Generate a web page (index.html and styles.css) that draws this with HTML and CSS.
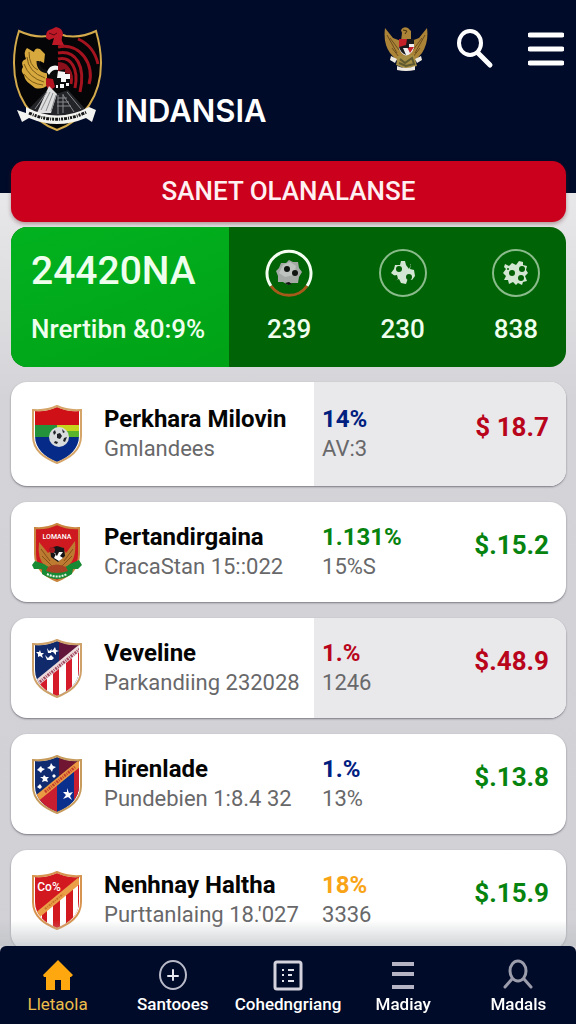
FILE: index.html
```html
<!DOCTYPE html>
<html lang="id">
<head>
    <meta charset="UTF-8">
    <meta name="viewport" content="width=device-width, initial-scale=1">
    <title>INDANSIA</title>
    <link rel="stylesheet" href="styles.css">
</head>
<body>
<header class="header">
    <div class="brand">
        <svg class="brand-logo" viewBox="12 26 92 106" aria-hidden="true">
            <path d="M19 31Q34 38 48 36Q57 32 66 36Q82 38 96 31Q101 48 101 63C101 96 84 120 57 130C30 120 14 96 14 63Q14 46 19 31Z" fill="#050507" stroke="#d3aa4c" stroke-width="2"/>
            <path d="M58 53C76 50 86 66 80 92M58 59C71 56 79 69 75 88M58 65C67 64 73 72 71 84M58 47C81 42 95 66 89 84M78 39Q94 46 98 64" fill="none" stroke="#a5131f" stroke-width="3"/>
            <path d="M58 62Q71 62 72 78L66 82L58 74Z" fill="#8b101b"/>
            <path d="M46 38Q45 30 52 29L56 27Q63 28 63 35Q60 39 64 45L52 45L54 38L49 40Z" fill="#bd1826"/>
            <path d="M49 33L54 35L57 33" fill="none" stroke="#540811"/>
            <path d="M27 48L34 52Q35 47 40 49L45 54L44 63L40 61Q37 65 40 69Q43 72 48 71L48 85Q42 90 35 88L30 84Q25 81 24 75Q20 71 23 67Q20 61 26 59Q23 52 27 48Z" fill="#d6a83e"/>
            <path d="M27 57Q28 72 45 78M24 64Q29 78 44 82M24 74Q31 84 43 85M29 52Q29 66 38 70" fill="none" stroke="#7d5b15" stroke-width="1"/>
            <path d="M38 61Q38 71 48 72" fill="none" stroke="#111" stroke-width="3"/>
            <path d="M47 72Q50 64 58 66L58 71L65 69V73L70 74V83L66 84V90L57 93L47 88Z" fill="#0a0a0b"/>
            <path d="M47 72Q50 64 58 66L58 70Q52 69 49 75ZM58 71L65 72V74H70V79H66V82H61V78H57ZM60 84H64V88H60ZM66 83H69V86H66ZM56 85H58V88H56Z" fill="#f5f5f5"/>
            <path d="M46 78L53 79L55 87L49 91L46 85Z" fill="#b31420"/>
            <path d="M26 112L49 88L56 94L68 90L88 112L57 117Z" fill="#232427"/>
            <path d="M49 86L57 94L51 113H37Z" fill="#dedede"/>
            <path d="M35 109L47 92M41 110L50 92M46 111L53 93M51 111L56 95M67 92L81 109M63 95L74 112M58 98H67M57 102H69M57 106H71M58 95V114M63 94V113" stroke="#888b8e" stroke-width="1"/>
            <path d="M26 107Q57 124 89 107L96 110L92 122L86 118Q57 130 29 118L22 122L17 110L26 113Z" fill="#f3f3ef"/>
            <path d="M29 113Q57 126 87 112" fill="none" stroke="#161616" stroke-width="3" stroke-dasharray="3 1 1 1 2 1"/>
        </svg>
        <h1 class="brand-name">INDANSIA</h1>
    </div>
    <div class="actions">
        <svg class="garuda" viewBox="0 0 44 46" aria-hidden="true">
            <path d="M1 2L9 12L17 15L18 7L17 4Q19 0 24 2L27 5L27 15L35 12L43 2Q45 16 38 27L30 36H14L6 27Q-1 17 1 2Z" fill="#ac8438"/>
            <path d="M3 9L13 27M6 12L15 24M41 9L31 27M38 12L29 24M8 22L15 31M36 22L29 31" fill="none" stroke="#6b4c1d"/>
            <path d="M19 4L23 5L21 8" fill="none" stroke="#45310f"/>
            <path d="M15 13H30V22Q28 28 22 30Q16 27 15 22Z" fill="#eee"/>
            <path d="M15 13H23V21H15ZM23 21H30L26 27Z" fill="#c52129"/>
            <path d="M23 13H30V18H25V22H19L22 29Q16 26 15 21L22 19Z" fill="#17191d"/>
            <path d="M14 30L30 29L33 40L22 43L12 39Z" fill="#a58d43"/>
            <path d="M16 33L21 37L28 32L30 38L22 40L15 37" fill="none" stroke="#5e5930" stroke-width="2"/>
            <path d="M7 30L13 33L11 37L6 34ZM37 30L31 33L33 37L38 34ZM13 40Q22 44 31 40V44Q22 46 13 44Z" fill="#eeeae2"/>
        </svg>
        <button class="icon-btn" type="button" aria-label="Cari">
            <svg width="38" height="40" viewBox="0 0 38 40" aria-hidden="true">
                <ellipse cx="14" cy="14" rx="11" ry="12" fill="none" stroke="#fff" stroke-width="4"/>
                <path d="M22 24L34 36" stroke="#fff" stroke-width="5" stroke-linecap="round"/>
            </svg>
        </button>
        <button class="icon-btn" type="button" aria-label="Menu">
            <svg width="36" height="34" viewBox="0 0 36 34" aria-hidden="true">
                <path d="M2 3H34M2 17H34M2 31H34" stroke="#fff" stroke-width="5" stroke-linecap="round"/>
            </svg>
        </button>
    </div>
</header>

<main class="main">
    <h2 class="banner">SANET OLANALANSE</h2>

    <section class="summary">
        <div class="summary-main">
            <p class="summary-value">24420NA</p>
            <p class="summary-note">Nrertibn &amp;0:9%</p>
        </div>
        <ul class="stats">
            <li class="stat">
                <svg class="stat-icon" viewBox="0 0 48 48" aria-hidden="true">
                    <path d="M6 37A22 22 0 1 1 42 37" fill="none" stroke="#f4fff2" stroke-width="3"/>
                    <path d="M6 37A22 22 0 0 0 42 37" fill="none" stroke="#a85a1b" stroke-width="3"/>
                    <path d="M16 14L21 14L24 11L28 13L33 13L34 19L37 23L34 28L33 34L27 34L23 36L18 33L13 33L13 27L11 22L14 19Z" fill="#a5aaa6"/>
                    <path d="M18 16L25 13L31 17L29 26L20 28L14 24Z" fill="#bfc3c0"/>
                    <circle cx="22" cy="20" r="3" fill="#101411"/>
                    <circle cx="30" cy="24" r="3" fill="#101411"/>
                    <path d="M20 34L24 33L27 35L23 36Z" fill="#101411"/>
                </svg>
                <span>239</span>
            </li>
            <li class="stat">
                <svg class="stat-icon" viewBox="0 0 48 48" aria-hidden="true">
                    <circle cx="24" cy="24" r="23" fill="none" stroke="#8abb8b" stroke-width="2"/>
                    <path d="M22 12H26L27 16L32 15L31 20L35 21L36 27L33 31L29 29L27 35L22 34L20 30L15 32L16 27L12 24L15 20L16 16L21 16Z" fill="#d3e6d4"/>
                    <circle cx="20" cy="20" r="3" fill="#046006"/>
                    <circle cx="30" cy="28" r="3" fill="#046006"/>
                    <path d="M27 16L29 13L32 16L30 20ZM13 27L18 26L19 30L15 33Z" fill="#046006"/>
                </svg>
                <span>230</span>
            </li>
            <li class="stat">
                <svg class="stat-icon" viewBox="0 0 48 48" aria-hidden="true">
                    <circle cx="24" cy="24" r="23" fill="none" stroke="#8abb8b" stroke-width="2"/>
                    <path d="M13 15L17 17L20 14L24 16L27 12L31 13L31 16L35 17L34 21L36 24L33 27L35 32L31 33L30 36L26 34L24 36L21 33L17 35L16 31L12 31L14 27L11 24L14 20L12 18Z" fill="#d3e6d4"/>
                    <circle cx="20" cy="24" r="3" fill="#046006"/>
                    <circle cx="30" cy="20" r="3" fill="#046006"/>
                    <circle cx="29" cy="29" r="3" fill="#046006"/>
                    <circle cx="16" cy="20" r="1" fill="#046006"/>
                </svg>
                <span>838</span>
            </li>
        </ul>
    </section>

    <ul class="list">
        <li class="card card-top card-split">
            <div class="team">
                <svg class="badge" viewBox="0 0 50 59" aria-hidden="true">
                    <clipPath id="shield"><path d="M25 2Q15 7 3 6V31C3 44 13 52 25 57C37 52 47 44 47 31V6Q35 7 25 2Z"/></clipPath>
                    <g clip-path="url(#shield)">
                        <path d="M0 0H50V20H0Z" fill="#cf1017"/>
                        <path d="M0 20H25V32H0Z" fill="#24913b"/>
                        <path d="M25 20H50V32H25Z" fill="#c5d51d"/>
                        <path d="M25 26H50V32H25Z" fill="#5ab52c"/>
                        <path d="M0 32H50V59H0Z" fill="#052a87"/>
                    </g>
                    <circle cx="27" cy="32" r="10" fill="#d9dcdc"/>
                    <path d="M25 29L28 28L30 31L28 34L25 33ZM21 27L23 25L24 28L22 30ZM30 24L33 27L31 28ZM32 33L35 32L33 37L31 36ZM23 36L26 37L25 39L22 38Z" fill="#202328"/>
                    <path d="M25 1Q15 6 1 5V31C1 46 13 53 25 58C37 53 49 46 49 31V5Q35 6 25 1Z" fill="none" stroke="#d5a468" stroke-width="2"/>
                </svg>
                <div>
                    <h3 class="name">Perkhara Milovin</h3>
                    <p class="sub">Gmlandees</p>
                </div>
            </div>
            <div class="figures">
                <div>
                    <p class="rate blue">14%</p>
                    <p class="sub">AV:3</p>
                </div>
                <p class="price red">$ 18.7</p>
            </div>
        </li>
        <li class="card">
            <div class="team">
                <svg class="badge" viewBox="0 0 50 59" aria-hidden="true">
                    <path d="M25 1Q15 6 3 5V31C3 46 13 53 25 58C37 53 47 46 47 31V5Q35 6 25 1Z" fill="#cf1920" stroke="#c9863f" stroke-width="2"/>
                    <text class="badge-text" x="25" y="16" font-size="7" text-anchor="middle">LOMANA</text>
                    <path d="M7 19L16 30L21 25L30 24L34 30L43 18Q45 36 35 44L25 49L13 43Q5 36 7 19Z" fill="#bc7b31"/>
                    <path d="M9 26L18 38M10 33L20 43M41 26L32 38M40 33L30 43" stroke="#865019"/>
                    <path d="M18 25L25 23L32 25L33 33L26 39L19 34Z" fill="#151416"/>
                    <path d="M20 28L24 31L22 35L27 38L31 35L28 33L31 29L27 29L25 33Z" fill="#fff"/>
                    <circle cx="20" cy="27" r="3" fill="#a31b20"/>
                    <path d="M0 42L3 38L12 41Q25 51 38 41L47 37L50 42L46 46L41 46L40 51Q25 61 10 51L10 46L2 46Z" fill="#188a34"/>
                    <path d="M16 44Q25 39 34 44L36 48Q25 52 14 48Z" fill="#a84424"/>
                    <path d="M15 51Q25 56 35 51" fill="none" stroke="#e7f5e7" stroke-width="2" stroke-dasharray="2 1"/>
                </svg>
                <div>
                    <h3 class="name">Pertandirgaina</h3>
                    <p class="sub">CracaStan 15::022</p>
                </div>
            </div>
            <div class="figures">
                <div>
                    <p class="rate green">1.131%</p>
                    <p class="sub">15%S</p>
                </div>
                <p class="price green">$.15.2</p>
            </div>
        </li>
        <li class="card card-split">
            <div class="team">
                <svg class="badge" viewBox="0 0 50 59" aria-hidden="true">
                    <g clip-path="url(#shield)">
                        <path d="M0 0H50V59H0Z" fill="#112a6c"/>
                        <path d="M27 0H50V12L27 28Z" fill="#62143a"/>
                        <path d="M0 49L50 9V59H0Z" fill="#fff"/>
                        <path d="M8 41L15 35V59H8ZM21 31L27 26V59H21ZM34 21L40 16V59H34ZM46 11H50V59H46Z" fill="#d51a2a"/>
                        <path d="M0 48L49 8" stroke="#ecd9dc" stroke-width="6"/>
                        <path d="M4 46L48 10" stroke="#a14a60" stroke-width="3" stroke-dasharray="2 1 1 1"/>
                        <path d="M8 11L9 14L12 14L10 16L11 19L8 17L6 18L6 15L4 13L7 13ZM15 9L17 12L20 10L19 14L16 14ZM23 8L24 11L27 12L24 13L24 16L21 13L18 13L21 11ZM13 16L16 19L19 16L22 19L20 21L15 21Z" fill="#fff"/>
                    </g>
                    <path d="M25 1Q15 6 1 5V31C1 46 13 53 25 58C37 53 49 46 49 31V5Q35 6 25 1Z" fill="none" stroke="#cda169" stroke-width="2"/>
                </svg>
                <div>
                    <h3 class="name">Veveline</h3>
                    <p class="sub">Parkandiing 232028</p>
                </div>
            </div>
            <div class="figures">
                <div>
                    <p class="rate red">1.%</p>
                    <p class="sub">1246</p>
                </div>
                <p class="price red">$.48.9</p>
            </div>
        </li>
        <li class="card">
            <div class="team">
                <svg class="badge" viewBox="0 0 50 59" aria-hidden="true">
                    <g clip-path="url(#shield)">
                        <path d="M0 0H50V59H0Z" fill="#102b70"/>
                        <path d="M27 0H50V12L27 28Z" fill="#701532"/>
                        <path d="M0 49L25 28V59H0ZM42 14L50 8V45L42 50Z" fill="#c91e30"/>
                        <path d="M25 29L42 15V55L25 59Z" fill="#0b2f8d"/>
                        <path d="M3 45L48 8" stroke="#e99a43" stroke-width="6"/>
                        <path d="M13 37L43 12" stroke="#c63d2b" stroke-width="3" stroke-dasharray="2 1 1 1"/>
                        <path d="M9 11L10 13L13 14L10 16L9 18L7 16L5 15L7 13ZM19 8L21 11L24 12L21 14L20 17L18 14L15 13L18 11ZM12 20L14 22L17 22L15 24L16 27L13 26L10 27L11 24L8 22L11 22ZM22 19L24 21L22 23L20 21ZM8 29L10 32L8 34L5 32ZM35 33L37 38L41 37L38 41L40 45L36 42L31 44L34 40L31 37L35 37Z" fill="#fff"/>
                    </g>
                    <path d="M25 1Q15 6 1 5V31C1 46 13 53 25 58C37 53 49 46 49 31V5Q35 6 25 1Z" fill="none" stroke="#c79b5b" stroke-width="2"/>
                </svg>
                <div>
                    <h3 class="name">Hirenlade</h3>
                    <p class="sub">Pundebien 1:8.4 32</p>
                </div>
            </div>
            <div class="figures">
                <div>
                    <p class="rate blue">1.%</p>
                    <p class="sub">13%</p>
                </div>
                <p class="price green">$.13.8</p>
            </div>
        </li>
        <li class="card">
            <div class="team">
                <svg class="badge" viewBox="0 0 50 59" aria-hidden="true">
                    <g clip-path="url(#shield)">
                        <path d="M0 0H50V59H0Z" fill="#d31920"/>
                        <path d="M15 37L21 32V59H15ZM28 26L34 21V59H28ZM41 15L46 11V59H41ZM7 44L10 42V55H7Z" fill="#fff"/>
                        <path d="M2 47L48 9" stroke="#eba048" stroke-width="6"/>
                        <path d="M13 38L31 23" stroke="#c77528" stroke-width="2" stroke-dasharray="2 1 1 1"/>
                    </g>
                    <text class="badge-text" x="17" y="20" font-size="12" text-anchor="middle">Co%</text>
                    <path d="M25 1Q15 6 1 5V31C1 46 13 53 25 58C37 53 49 46 49 31V5Q35 6 25 1Z" fill="none" stroke="#d79450" stroke-width="2"/>
                </svg>
                <div>
                    <h3 class="name">Nenhnay Haltha</h3>
                    <p class="sub">Purttanlaing 18.'027</p>
                </div>
            </div>
            <div class="figures">
                <div>
                    <p class="rate orange">18%</p>
                    <p class="sub">3336</p>
                </div>
                <p class="price green">$.15.9</p>
            </div>
        </li>
    </ul>
</main>

<nav class="tabbar">
    <a class="tab active" href="#">
        <svg width="30" height="32" viewBox="0 0 30 32" aria-hidden="true">
            <path d="M15 1L30 16L28 18H27V31H18V21H12V31H3V18H1L0 16Z" fill="#ffa70f"/>
        </svg>
        Lletaola
    </a>
    <a class="tab" href="#">
        <svg width="30" height="32" viewBox="0 0 30 32" aria-hidden="true">
            <ellipse cx="15" cy="16" rx="13" ry="14" fill="none" stroke="#b9bac9" stroke-width="2"/>
            <path d="M15 11V21M10 17H20" stroke="#e8e8f0" stroke-width="2" stroke-linecap="round"/>
        </svg>
        Santooes
    </a>
    <a class="tab" href="#">
        <svg width="30" height="32" viewBox="0 0 30 32" aria-hidden="true">
            <rect x="2" y="3" width="26" height="27" rx="2" fill="none" stroke="#d4d2dc" stroke-width="3"/>
            <path d="M9 11H11M9 16H11M9 22H11M15 11H21M15 16H19M15 22H21" stroke="#e4e4ec" stroke-width="2"/>
        </svg>
        Cohedngriang
    </a>
    <a class="tab" href="#">
        <svg width="30" height="32" viewBox="0 0 30 32" aria-hidden="true">
            <path d="M4 5H26M4 15H26M4 28H26" stroke="#b4b4c4" stroke-width="4" />
        </svg>
        Madiay
    </a>
    <a class="tab" href="#">
        <svg width="30" height="32" viewBox="0 0 30 32" aria-hidden="true">
            <ellipse cx="15" cy="12" rx="8" ry="10" fill="none" stroke="#9b9cac" stroke-width="3"/>
            <path d="M9 20L2 28M21 20L28 28" stroke="#9b9cac" stroke-width="3" stroke-linecap="round"/>
        </svg>
        Madals
    </a>
</nav>
</body>
</html>
```

FILE: styles.css
```css
*{
    margin:0;
    padding:0;
    box-sizing: border-box;
}
ul{
    list-style: none;
}
body{
    min-height: 100vh;
    background: linear-gradient(#e8e8ea 190px, #d4d3d7 400px, #d1d0d5);
    font-family: Roboto, "Liberation Sans", sans-serif;
    color: #050505;
}
.header{
    display: flex;
    justify-content: space-between;
    align-items: flex-start;
    padding:26px 12px 61px;
    background: #000b29;
}
.brand{
    display: flex;
    align-items: flex-end;
    gap:12px;
}
.brand-logo{
    width:92px;
    height:106px;
}
.brand-name{
    font-family: Inter, "Liberation Sans", sans-serif;
    font-size: 31px;
    font-weight: 600;
    line-height: 42px;
    color: #fff;
}
.actions{
    display: flex;
    align-items: center;
    gap:32px;
}
.garuda{
    width:44px;
    height:46px;
}
.icon-btn{
    display: flex;
    border:0;
    background: none;
    cursor: pointer;
}
.icon-btn + .icon-btn{
    margin-left: 2px;
}
.garuda + .icon-btn{
    margin-left: -4px;
}
.main{
    margin-top: -32px;
    padding:0 10px 74px 11px;
}
.banner{
    border-radius: 14px;
    background: #cb001c;
    box-shadow: 0 2px 4px rgba(90,30,30,.4);
    font-size: 26px;
    font-weight: 500;
    line-height: 61px;
    text-align: center;
    color: #fff0f2;
}
.summary{
    display: flex;
    margin-top: 5px;
    border-radius: 16px;
    overflow: hidden;
    background: #006306;
    color: #efffed;
}
.summary-main{
    width:39.3%;
    padding:19px 0 23px 20px;
    background: linear-gradient(160deg, #02b21f, #00a216);
    white-space: nowrap;
}
.summary-value{
    font-size: 39px;
    font-weight: 500;
    line-height: 50px;
}
.summary-note{
    margin-top: 18px;
    font-size: 26px;
    font-weight: 500;
    line-height: 30px;
}
.stats{
    flex: 1;
    display: flex;
    justify-content: space-between;
    padding:22px 26px 23px 36px;
}
.stat{
    display: flex;
    flex-direction: column;
    align-items: center;
    gap:17px;
    width:48px;
    font-size: 26px;
    font-weight: 500;
    line-height: 30px;
}
.stat-icon{
    width:48px;
    height:48px;
}
.list{
    display: grid;
    gap:16px;
    margin-top: 15px;
}
.card{
    display: flex;
    border-radius: 16px;
    overflow: hidden;
    background: #fff;
    box-shadow: 0 1px 2px rgba(60,60,75,.6);
}
.team{
    display: flex;
    align-items: center;
    gap:22px;
    width:54.6%;
    padding:20px 0 20px 21px;
    white-space: nowrap;
}
.figures{
    flex: 1;
    display: flex;
    justify-content: space-between;
    align-items: flex-start;
    padding:20px 17px 20px 8px;
}
.card-top .team,
.card-top .figures{
    padding-top: 22px;
    padding-bottom: 22px;
}
.card-split .figures{
    background: #e9e9eb;
}
.badge{
    flex: none;
    width:50px;
    height:59px;
}
.badge-text{
    font-weight: 500;
    fill: #fff;
}
.name{
    font-size: 24px;
    font-weight: 700;
    line-height: 30px;
}
.sub{
    font-size: 22px;
    line-height: 30px;
    color: #68686a;
}
.rate{
    font-size: 24px;
    font-weight: 700;
    line-height: 30px;
}
.price{
    font-size: 26px;
    font-weight: 700;
    line-height: 46px;
}
.blue{
    color: #00207f;
}
.red{
    color: #b9051c;
}
.green{
    color: #07830f;
}
.orange{
    color: #f8a416;
}
.tabbar{
    position: fixed;
    left:0;
    right:0;
    bottom:0;
    display: grid;
    grid-template-columns: repeat(5, 1fr);
    padding:13px 0 8px;
    border-radius: 6px 6px 0 0;
    background: #000b29;
}
/* fade of the list above the bar */
.tabbar::before{
    content: "";
    position: absolute;
    left:0;
    right:0;
    bottom:100%;
    height:26px;
    background: linear-gradient(rgba(190,194,198,0), rgba(190,194,198,.7));
    pointer-events: none;
}
.tab{
    display: flex;
    flex-direction: column;
    align-items: center;
    gap:1px;
    font-size: 17px;
    font-weight: 500;
    line-height: 24px;
    text-decoration: none;
    color: #fff;
}
.tab.active{
    font-weight: 400;
    color: #ecbd4a;
}
```
